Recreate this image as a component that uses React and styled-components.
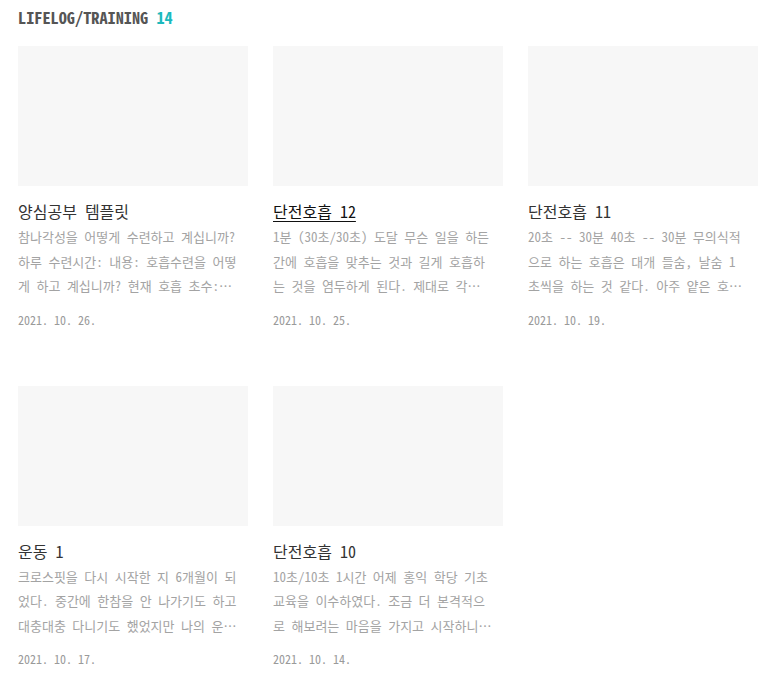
import React from "react";
import styled, { createGlobalStyle } from "styled-components";

const GlobalStyle = createGlobalStyle`
  body {
    margin: 0;
    background: #fff;
  }
`;

const mono = `"Noto Sans Mono CJK KR", "D2Coding", "Noto Sans CJK KR", monospace`;

const Page = styled.div`
  padding: 5px 18px 20px;
  font-family: ${mono};
`;

const Heading = styled.h2`
  margin: 0 0 17px;
  font-size: 16.3px;
  line-height: 24px;
  font-weight: bold;
  color: #555;
`;

const Count = styled.span`
  color: #1cb9bd;
`;

const Grid = styled.div`
  display: grid;
  grid-template-columns: repeat(3, 230px);
  column-gap: 25px;
  row-gap: 57px;
`;

const Card = styled.a`
  display: block;
  text-decoration: none;
  cursor: pointer;
`;

const Thumb = styled.div`
  height: 140px;
  background: #f7f7f7;
`;

const Title = styled.div`
  margin-top: 13px;
  font-size: 16px;
  line-height: 24px;
  color: ${(p) => (p.$active ? "#111" : "#333")};
  text-decoration: ${(p) => (p.$active ? "underline" : "none")};
  text-underline-offset: 3px;
`;

const Excerpt = styled.p`
  margin: 2px 0 0;
  padding-right: 11.5px;
  font-size: 13px;
  line-height: 24.5px;
  color: #a3a3a3;
  word-break: break-all;
  display: -webkit-box;
  -webkit-line-clamp: 3;
  -webkit-box-orient: vertical;
  overflow: hidden;
`;

const Date = styled.div`
  margin-top: 12px;
  font-size: 12px;
  line-height: 18px;
  color: #9a9a9a;
`;

const posts = [
  {
    title: "양심공부 템플릿",
    excerpt:
      "참나각성을 어떻게 수련하고 계십니까? 하루 수련시간: 내용: 호흡수련을 어떻게 하고 계십니까? 현재 호흡 초수: 20초 수련 내용과 느낀 점을 적어봅니다.",
    date: "2021. 10. 26.",
  },
  {
    title: "단전호흡 12",
    excerpt:
      "1분 (30초/30초) 도달 무슨 일을 하든 간에 호흡을 맞추는 것과 길게 호흡하는 것을 염두하게 된다. 제대로 각을 잡고 앉아서 호흡을 하니",
    date: "2021. 10. 25.",
    active: true,
  },
  {
    title: "단전호흡 11",
    excerpt:
      "20초 -- 30분 40초 -- 30분 무의식적으로 하는 호흡은 대개 들숨, 날숨 1초씩을 하는 것 같다. 아주 얕은 호흡을 하고 있었던 것이다.",
    date: "2021. 10. 19.",
  },
  {
    title: "운동 1",
    excerpt:
      "크로스핏을 다시 시작한 지 6개월이 되었다. 중간에 한참을 안 나가기도 하고 대충대충 다니기도 했었지만 나의 운동 기록을 남겨보려 한다.",
    date: "2021. 10. 17.",
  },
  {
    title: "단전호흡 10",
    excerpt:
      "10초/10초 1시간 어제 홍익 학당 기초 교육을 이수하였다. 조금 더 본격적으로 해보려는 마음을 가지고 시작하니 호흡이 달라졌다.",
    date: "2021. 10. 14.",
  },
];

export default function App() {
  return (
    <Page>
      <GlobalStyle />
      <Heading>
        LIFELOG/TRAINING <Count>14</Count>
      </Heading>
      <Grid>
        {posts.map((p) => (
          <Card key={p.title}>
            <Thumb />
            <Title $active={p.active}>{p.title}</Title>
            <Excerpt>{p.excerpt}</Excerpt>
            <Date>{p.date}</Date>
          </Card>
        ))}
      </Grid>
    </Page>
  );
}
